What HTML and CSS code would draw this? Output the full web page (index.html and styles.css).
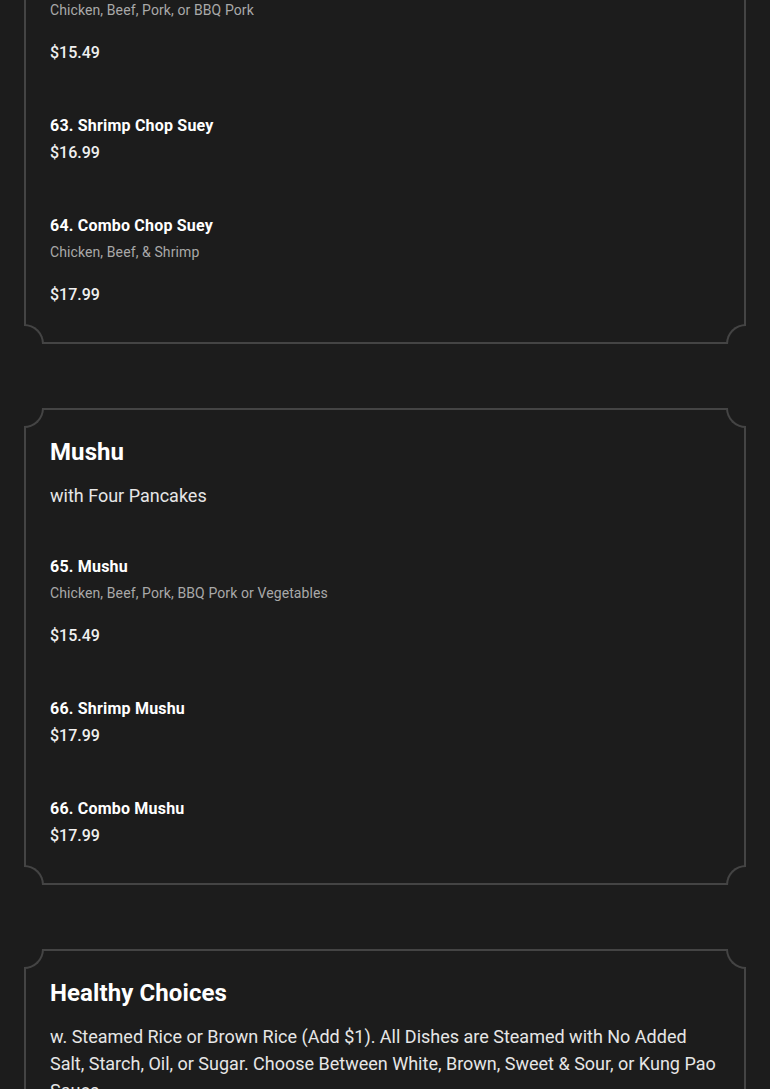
FILE: index.html
```html
<!DOCTYPE html>
<html lang="en">
<head>
<meta charset="utf-8">
<title>Menu</title>
<link rel="stylesheet" href="styles.css">
</head>
<body>
<main class="menu">
  <section class="card">
    <span class="corner tl"></span><span class="corner tr"></span><span class="corner bl"></span><span class="corner br"></span>
    <div class="items">
      <div class="item">
        <div class="name">62. Chop Suey</div>
        <div class="desc">Chicken, Beef, Pork, or BBQ Pork</div>
        <div class="price">$15.49</div>
      </div>
      <div class="item">
        <div class="name">63. Shrimp Chop Suey</div>
        <div class="price">$16.99</div>
      </div>
      <div class="item">
        <div class="name">64. Combo Chop Suey</div>
        <div class="desc">Chicken, Beef, &amp; Shrimp</div>
        <div class="price">$17.99</div>
      </div>
    </div>
  </section>

  <section class="card">
    <span class="corner tl"></span><span class="corner tr"></span><span class="corner bl"></span><span class="corner br"></span>
    <h2 class="title">Mushu</h2>
    <p class="subtitle">with Four Pancakes</p>
    <div class="items">
      <div class="item">
        <div class="name">65. Mushu</div>
        <div class="desc">Chicken, Beef, Pork, BBQ Pork or Vegetables</div>
        <div class="price">$15.49</div>
      </div>
      <div class="item">
        <div class="name">66. Shrimp Mushu</div>
        <div class="price">$17.99</div>
      </div>
      <div class="item">
        <div class="name">66. Combo Mushu</div>
        <div class="price">$17.99</div>
      </div>
    </div>
  </section>

  <section class="card">
    <span class="corner tl"></span><span class="corner tr"></span><span class="corner bl"></span><span class="corner br"></span>
    <h2 class="title">Healthy Choices</h2>
    <p class="subtitle">w. Steamed Rice or Brown Rice (Add $1). All Dishes are Steamed with No Added Salt, Starch, Oil, or Sugar. Choose Between White, Brown, Sweet &amp; Sour, or Kung Pao Sauce.</p>
    <div class="items">
      <div class="item">
        <div class="name">67. Steamed Chicken</div>
        <div class="price">$15.49</div>
      </div>
    </div>
  </section>
</main>
</body>
</html>
```
FILE: styles.css
```css
html, body {
  margin: 0;
  padding: 0;
  background: #1c1c1c;
}
body {
  font-family: Roboto, "Liberation Sans", sans-serif;
  color: #ffffff;
  overflow: hidden;
}
.menu {
  padding: 0 24px;
  margin-top: -57px;
  display: flex;
  flex-direction: column;
  gap: 64px;
}
.card {
  position: relative;
  border: 2px solid #444444;
  padding: 26px 24px 35px;
}
.corner {
  position: absolute;
  width: 18px;
  height: 18px;
  background: #1c1c1c;
  border: 0 solid #444444;
}
.corner.tl {
  top: -2px; left: -2px;
  border-right-width: 2px; border-bottom-width: 2px;
  border-bottom-right-radius: 20px;
}
.corner.tr {
  top: -2px; right: -2px;
  border-left-width: 2px; border-bottom-width: 2px;
  border-bottom-left-radius: 20px;
}
.corner.bl {
  bottom: -2px; left: -2px;
  border-right-width: 2px; border-top-width: 2px;
  border-top-right-radius: 20px;
}
.corner.br {
  bottom: -2px; right: -2px;
  border-left-width: 2px; border-top-width: 2px;
  border-top-left-radius: 20px;
}
.title {
  margin: 0 0 14px;
  font-size: 24px;
  line-height: 32px;
  font-weight: 700;
  letter-spacing: 0.1px;
  color: #ffffff;
}
.subtitle {
  margin: 0 0 45px;
  font-size: 18px;
  line-height: 27px;
  font-weight: 400;
  color: #e6e6e6;
}
.items {
  display: flex;
  flex-direction: column;
  gap: 48px;
}
.name {
  font-size: 16px;
  line-height: 26px;
  font-weight: 700;
  letter-spacing: 0.2px;
  color: #ffffff;
}
.desc {
  font-size: 14px;
  line-height: 26px;
  letter-spacing: 0.1px;
  color: #a9a9a9;
  margin-bottom: 16px;
}
.price {
  font-size: 16px;
  line-height: 26px;
  font-weight: 500;
  padding-top: 1px;
  margin-bottom: -1px;
  color: #f0f0f0;
}
```
